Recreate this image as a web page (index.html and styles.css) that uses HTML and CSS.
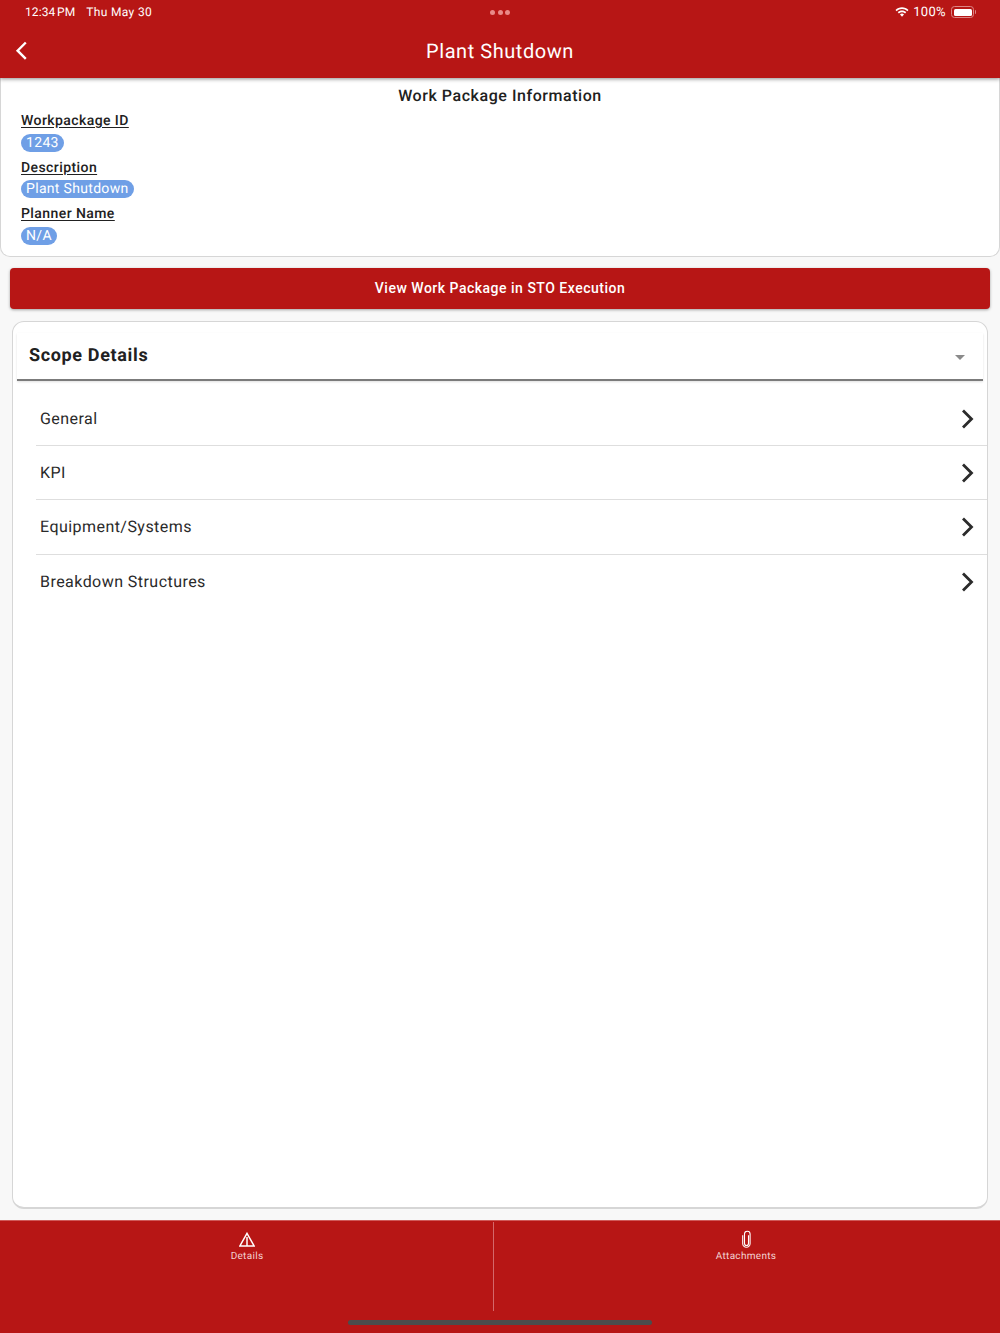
FILE: index.html
```html
<!DOCTYPE html>
<html lang="en">
<head>
<meta charset="utf-8">
<title>Plant Shutdown</title>
<link rel="stylesheet" href="styles.css">
</head>
<body>
<div class="app">
  <header class="header">
    <div class="status">
      <div class="status-left"><span class="time">12:34 PM</span><span>Thu May 30</span></div>
      <div class="status-dots"><i></i><i></i><i></i></div>
      <div class="status-right">
        <svg class="wifi" width="14" height="11" viewBox="0 0 14 11"><path d="M7 2.100c2.100 0 3.900.8 5.300 2.100l1.200-1.300C11.800 1.200 9.500.2 7 .2S2.200 1.200.5 2.900l1.200 1.300C3.100 2.900 4.900 2.100 7 2.100z" fill="#fff"/><path d="M7 5.200c1.200 0 2.200.4 3.100 1.200l1.200-1.300C10.100 4 8.600 3.400 7 3.400S3.900 4 2.700 5.100l1.200 1.300C4.800 5.600 5.800 5.200 7 5.200z" fill="#fff"/><path d="M7 6.600c-.8 0-1.500.3-2 .8l2 2.300 2-2.300c-.5-.5-1.200-.8-2-.8z" fill="#fff"/></svg>
        <span class="pct">100%</span>
        <span class="battery"><span class="battery-fill"></span></span>
        <span class="battery-tip"></span>
      </div>
    </div>
    <div class="navbar">
      <svg class="back" width="14" height="22" viewBox="0 0 14 22"><path d="M11.800 2.500 3.600 10.700l8.200 8.200" fill="none" stroke="#fff" stroke-width="2.400"/></svg>
      <h1 class="title">Plant Shutdown</h1>
    </div>
  </header>

  <section class="info">
    <h2 class="info-title">Work Package Information</h2>
    <div class="field"><span class="label">Workpackage ID</span><span class="chip">1243</span></div>
    <div class="field"><span class="label">Description</span><span class="chip">Plant Shutdown</span></div>
    <div class="field"><span class="label">Planner Name</span><span class="chip">N/A</span></div>
  </section>

  <button class="action">View Work Package in STO Execution</button>

  <section class="scope">
    <div class="scope-head">
      <span class="scope-title">Scope Details</span>
      <span class="caret"></span>
    </div>
    <ul class="rows">
      <li class="row"><span>General</span><svg class="chev" width="14" height="20" viewBox="0 0 14 20"><path d="M2 1.500 10.500 10 2 18.500" fill="none" stroke="#2b2b2b" stroke-width="2.800"/></svg></li>
      <li class="row"><span>KPI</span><svg class="chev" width="14" height="20" viewBox="0 0 14 20"><path d="M2 1.500 10.500 10 2 18.500" fill="none" stroke="#2b2b2b" stroke-width="2.800"/></svg></li>
      <li class="row"><span>Equipment/Systems</span><svg class="chev" width="14" height="20" viewBox="0 0 14 20"><path d="M2 1.500 10.500 10 2 18.500" fill="none" stroke="#2b2b2b" stroke-width="2.800"/></svg></li>
      <li class="row"><span>Breakdown Structures</span><svg class="chev" width="14" height="20" viewBox="0 0 14 20"><path d="M2 1.500 10.500 10 2 18.500" fill="none" stroke="#2b2b2b" stroke-width="2.800"/></svg></li>
    </ul>
  </section>

  <footer class="tabs">
    <div class="tab tab-left">
      <svg width="16" height="15" viewBox="0 0 16 15"><path d="M8 1.400 .9 14h14.200zM8 5v9" fill="none" stroke="#fff" stroke-width="1.500"/></svg>
      <span>Details</span>
    </div>
    <div class="tab tab-right">
      <svg width="11" height="18" viewBox="0 0 11 18"><path d="M7.500 5v8.200a2 2 0 0 1-4 0V3.800a2.800 2.800 0 0 1 5.600 0v9.400a3.700 3.700 0 0 1-7.400 0V5" transform="translate(0 .3)" fill="none" stroke="#fff" stroke-width="1.100"/></svg>
      <span>Attachments</span>
    </div>
    <div class="home-bar"></div>
  </footer>
</div>
</body>
</html>
```

FILE: styles.css
```css
* { box-sizing: border-box; }
html, body { margin: 0; padding: 0; }
body { background: #f8f8f8; font-family: Roboto, "Liberation Sans", sans-serif; color: #212121; text-rendering: geometricPrecision; }
.app { width: 1000px; height: 1333px; display: flex; flex-direction: column; overflow: hidden; }

.header { height: 78px; background: #b71615; color: #fff; box-shadow: 0 1px 4px rgba(0,0,0,.45); position: relative; z-index: 2; flex: none; }
.status { height: 24px; padding: 0 25px; display: grid; grid-template-columns: 1fr auto 1fr; align-items: center; font-size: 12px; letter-spacing: .35px; }
.status-left { display: flex; gap: 11px; }
.time { word-spacing: -1.500px; letter-spacing: .1px; }
.status-dots { display: flex; gap: 2.500px; }
.status-dots i { width: 5px; height: 5px; border-radius: 50%; background: #e98a88; }
.status-right { display: flex; align-items: center; justify-content: flex-end; font-size: 13px; margin-right: -1px; }
.wifi { margin-right: 4px; }
.pct { margin-right: 5px; line-height: 14px; position: relative; top: .5px; }
.battery { width: 23px; height: 12px; border: 1px solid #dc8685; border-radius: 3.500px; padding: 1.500px; display: block; }
.battery-fill { display: block; width: 100%; height: 100%; background: #fff; border-radius: 1.500px; }
.battery-tip { width: 1.500px; height: 4px; background: #dc8685; border-radius: 0 1px 1px 0; margin-left: .5px; }
.navbar { height: 54px; display: flex; align-items: center; justify-content: center; position: relative; }
.back { position: absolute; left: 14px; top: 16px; }
.title { margin: 0 0 1px; font-size: 20px; font-weight: 400; letter-spacing: .55px; }

.info { height: 179px; background: #fff; border: 1px solid #d6d6d6; border-top: 0; border-radius: 0 0 10px 10px; padding: 8px 20px 0; flex: none; }
.info-title { margin: 0 0 4px; font-size: 16px; line-height: 20px; font-weight: 500; text-align: center; letter-spacing: .55px; color: #212121; }
.field { display: flex; flex-direction: column; align-items: flex-start; height: 46.500px; }
.label { font-size: 14px; line-height: 16px; font-weight: 500; letter-spacing: .42px; text-decoration: underline; text-underline-offset: 2px; color: #212121; margin-top: 3px; }
.chip { margin-top: 4.500px; height: 18px; line-height: 18px; padding: 0 5px; border-radius: 9px; background: #6f9fe6; color: #fff; font-size: 14px; letter-spacing: .32px; }

.action { flex: none; display: block; width: 980px; height: 41px; margin: 11px 10px 0; padding: 0 0 1px; border: 0; border-radius: 4px; background: #b71615; color: #fff; font-family: inherit; font-size: 14px; font-weight: 500; letter-spacing: .5px; box-shadow: 0 1px 3px rgba(0,0,0,.35); }

.scope { flex: none; width: 976px; height: 888px; margin: 12px 12px 0; background: #fff; border: 1px solid #d6d6d6; border-bottom-width: 2px; border-radius: 12px; padding-top: 11px; overflow: hidden; }
.scope-head { height: 48px; margin: 0 4px; padding: 0 18px 2px 12px; display: flex; align-items: center; justify-content: space-between; background: #fff; box-shadow: 0 1px 2px rgba(0,0,0,.12); border-bottom: 2px solid #7b7b7b; }
.scope-title { font-size: 18px; font-weight: 700; letter-spacing: .65px; color: #212121; }
.caret { width: 0; height: 0; border-left: 5px solid transparent; border-right: 5px solid transparent; border-top: 5px solid #8a8a8a; margin-top: 4px; }

.rows { list-style: none; margin: 11px 0 0 23px; padding: 0; }
.row { height: 54.200px; border-bottom: 1px solid #dedede; display: flex; align-items: center; justify-content: space-between; padding: 0 12px 0 4px; font-size: 16px; letter-spacing: .45px; color: #2a2a2a; }
.row:last-child { border-bottom: 0; }

.tabs { flex: none; margin-top: 11px; height: 113px; background: #b71615; border-top: 1px solid #cf5a59; display: grid; grid-template-columns: 494px 1fr; position: relative; color: #f3d3d3; }
.tab { display: flex; flex-direction: column; align-items: center; height: 89px; font-size: 10px; letter-spacing: .3px; }
.tab span { margin-top: 4px; line-height: 12px; }
.tab-left { border-right: 1px solid #d4686a; margin-top: 1px; padding: 10px 0 0 1px; }
.tab-right { padding-top: 9px; padding-right: 2px; }
.tab-right span { margin-top: 3px; }
.home-bar { position: absolute; left: 348px; top: 99px; width: 304px; height: 5px; border-radius: 3px; background: #4c4c4c; }
```
